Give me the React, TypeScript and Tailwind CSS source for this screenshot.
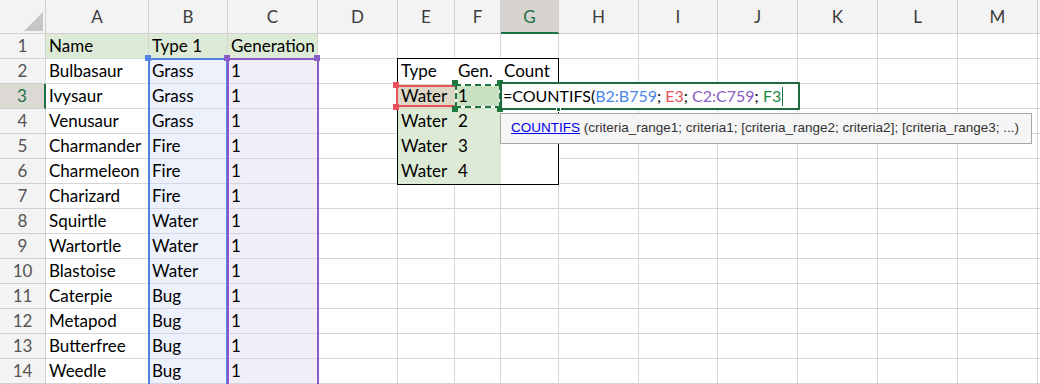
import React from "react";

const COLS = ["A", "B", "C", "D", "E", "F", "G", "H", "I", "J", "K", "L", "M", "N"];
const ROWS = Array.from({ length: 14 }, (_, i) => i + 1);

const pokemon: [string, string][] = [
  ["Bulbasaur", "Grass"],
  ["Ivysaur", "Grass"],
  ["Venusaur", "Grass"],
  ["Charmander", "Fire"],
  ["Charmeleon", "Fire"],
  ["Charizard", "Fire"],
  ["Squirtle", "Water"],
  ["Wartortle", "Water"],
  ["Blastoise", "Water"],
  ["Caterpie", "Bug"],
  ["Metapod", "Bug"],
  ["Butterfree", "Bug"],
  ["Weedle", "Bug"],
];

type Cell = { text?: string; fill: string };

// fill = background + gridline colour for that cell
const GRID = "bg-white border-[#d6d6d6]";
const HEAD_GREEN = "bg-[#ddebd6] border-[#d6d6d6]";
const BLUE = "bg-[#edf1fb] border-[#d4d7df]";
const PURPLE = "bg-[#f2eef8] border-[#d8d4de]";
const TABLE_WHITE = "bg-white border-white";
const TABLE_GREEN = "bg-[#ddebd6] border-[#ddebd6]";

function getCell(col: string, row: number): Cell {
  if (row === 1) {
    if (col === "A") return { text: "Name", fill: HEAD_GREEN };
    if (col === "B") return { text: "Type 1", fill: HEAD_GREEN };
    if (col === "C") return { text: "Generation", fill: HEAD_GREEN };
  }
  if (row >= 2) {
    const p = pokemon[row - 2];
    if (col === "A") return { text: p[0], fill: GRID };
    if (col === "B") return { text: p[1], fill: BLUE };
    if (col === "C") return { text: "1", fill: PURPLE };
  }
  if (row >= 2 && row <= 6 && (col === "E" || col === "F" || col === "G")) {
    if (row === 2) {
      const t = col === "E" ? "Type" : col === "F" ? "Gen." : "Count";
      return { text: t, fill: TABLE_WHITE };
    }
    if (row === 3) {
      if (col === "E") return { text: "Water", fill: "bg-[#ddd8c6] border-[#ddd8c6]" };
      if (col === "F") return { text: "1", fill: "bg-[#c9e0c1] border-[#c9e0c1]" };
      return { fill: TABLE_WHITE };
    }
    if (col === "E") return { text: "Water", fill: TABLE_GREEN };
    if (col === "F") return { text: String(row - 2), fill: TABLE_GREEN };
    return { fill: TABLE_WHITE };
  }
  return { fill: GRID };
}

const Handle = ({ cls }: { cls: string }) => (
  <div className={`absolute w-[6px] h-[6px] ${cls}`} />
);

export default function App() {
  return (
    <div className="relative w-[1040px] h-[384px] overflow-hidden bg-white font-['Lato','Liberation_Sans',sans-serif] text-[17px] text-black">
      <div className="grid grid-cols-[46px_103px_79px_90px_80px_57px_46px_58px_80px_79px_80px_80px_80px_80px_80px] grid-rows-[34px_repeat(14,25px)]">
        {/* corner */}
        <div className="relative bg-[#f3f3f3] border-r border-b border-[#d0d0d0]">
          <svg className="absolute left-[24px] top-[12px]" width="19" height="19" viewBox="0 0 19 19">
            <polygon points="19,0 19,19 0,19" fill="#c6c6c6" />
          </svg>
        </div>
        {COLS.map((c) => (
          <div
            key={c}
            className={
              c === "G"
                ? "flex items-end justify-center pb-[3px] bg-[#d7d4d0] border-r border-[#d0d0d0] border-b-2 border-b-[#1e7145] text-[#1e7145]"
                : "flex items-end justify-center pb-[4px] bg-[#f3f3f3] border-r border-b border-[#d0d0d0] text-[#3c3c3c]"
            }
          >
            {c === "N" ? "" : c}
          </div>
        ))}
        {ROWS.map((r) => (
          <React.Fragment key={r}>
            <div
              className={
                r === 3
                  ? "flex items-center justify-center bg-[#dcd9d5] border-b border-[#d0d0d0] border-r-2 border-r-[#1e7145] text-[#1e7145]"
                  : "flex items-center justify-center bg-[#f3f3f3] border-r border-b border-[#d0d0d0] text-[#555]"
              }
            >
              {r}
            </div>
            {COLS.map((c) => {
              const cell = getCell(c, r);
              return (
                <div
                  key={c + r}
                  className={`flex items-center pl-[3px] border-r border-b whitespace-nowrap overflow-hidden ${cell.fill}`}
                >
                  {cell.text}
                </div>
              );
            })}
          </React.Fragment>
        ))}
      </div>

      {/* range B2:B759 */}
      <div className="absolute left-[148px] top-[58px] w-[80px] h-[400px] border-2 border-[#4f82e3]" />
      <Handle cls="left-[145px] top-[55px] bg-[#4f82e3]" />
      {/* range C2:C759 */}
      <div className="absolute left-[227px] top-[58px] w-[92px] h-[400px] border-2 border-[#8a5cc6]" />
      <Handle cls="left-[224px] top-[55px] bg-[#8a5cc6]" />
      <Handle cls="left-[314px] top-[55px] bg-[#8a5cc6]" />

      {/* summary table border E2:G6 */}
      <div className="absolute left-[397px] top-[58px] w-[162px] h-[127px] border border-black" />

      {/* E3 reference */}
      <div className="absolute left-[396px] top-[85px] w-[59px] h-[22px] border-2 border-r-0 border-[#e8525b]" />
      <Handle cls="left-[393px] top-[82px] bg-[#e8525b]" />
      <Handle cls="left-[393px] top-[104px] bg-[#e8525b]" />

      {/* F3 reference, marching ants */}
      <div className="absolute left-[455px] top-[84px] w-[46px] h-[24px] border-2 border-white" />
      <div className="absolute left-[455px] top-[84px] w-[46px] h-[24px] border-2 border-dashed border-[#1e7145]" />
      <Handle cls="left-[452px] top-[80px] bg-[#1e7a3c]" />
      <Handle cls="left-[452px] top-[106px] bg-[#1e7a3c]" />
      <Handle cls="left-[497px] top-[80px] bg-[#1e7a3c]" />
      <Handle cls="left-[497px] top-[106px] bg-[#1e7a3c]" />

      {/* in-cell editor G3 */}
      <div className="absolute left-[500px] top-[82px] w-[300px] h-[28px] border-2 border-[#1d6b3f] bg-white flex items-center pl-[1px] whitespace-nowrap text-[16px]">
        <span>=COUNTIFS(</span>
        <span className="text-[#4a86e8]">B2:B759</span>
        <span>;&nbsp;</span>
        <span className="text-[#e8525b]">E3</span>
        <span>;&nbsp;</span>
        <span className="text-[#8a5cc6]">C2:C759</span>
        <span>;&nbsp;</span>
        <span className="text-[#1e8a3c]">F3</span>
        <span className="inline-block w-px h-[19px] bg-[#1e7145] ml-[1px]" />
      </div>
      <div className="absolute left-[556px] top-[107px] w-[5px] h-[5px] bg-[#1d6b3f] border border-white" />

      {/* function tooltip */}
      <div className="absolute left-[500px] top-[113px] w-[532px] h-[31px] border border-[#a6a6a6] bg-[#f5f5f5] flex items-center pl-[10px] font-['Liberation_Sans',sans-serif] text-[13.5px] text-[#333] whitespace-nowrap">
        <span className="text-[#0000ee] underline">COUNTIFS</span>
        <span>&nbsp;(criteria_range1; criteria1; [criteria_range2; criteria2]; [criteria_range3; ...)</span>
      </div>
    </div>
  );
}
